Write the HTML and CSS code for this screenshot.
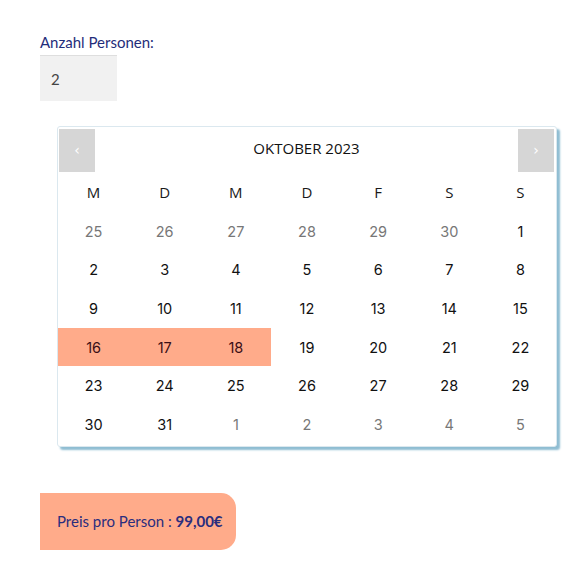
FILE: index.html
```
<!doctype html>
<html>
<head>
  <meta charset="utf-8">
  <title>Buchung</title>
  <link rel="stylesheet" href="styles.css">
</head>
<body>

  <div class="booking">
    <label class="persons-label" for="persons">Anzahl Personen:</label>
    <input class="persons-input" id="persons" type="text" value="2">

    <div class="calendar">
      <div class="cal-head">
        <button class="cal-nav">&#8249;</button>
        <div class="cal-title">OKTOBER 2023</div>
        <button class="cal-nav">&#8250;</button>
      </div>
      <div class="cal-grid">
        <div class="cal-dow">M</div>
        <div class="cal-dow">D</div>
        <div class="cal-dow">M</div>
        <div class="cal-dow">D</div>
        <div class="cal-dow">F</div>
        <div class="cal-dow">S</div>
        <div class="cal-dow">S</div>

        <div class="cal-day other">25</div>
        <div class="cal-day other">26</div>
        <div class="cal-day other">27</div>
        <div class="cal-day other">28</div>
        <div class="cal-day other">29</div>
        <div class="cal-day other">30</div>
        <div class="cal-day">1</div>

        <div class="cal-day">2</div>
        <div class="cal-day">3</div>
        <div class="cal-day">4</div>
        <div class="cal-day">5</div>
        <div class="cal-day">6</div>
        <div class="cal-day">7</div>
        <div class="cal-day">8</div>

        <div class="cal-day">9</div>
        <div class="cal-day">10</div>
        <div class="cal-day">11</div>
        <div class="cal-day">12</div>
        <div class="cal-day">13</div>
        <div class="cal-day">14</div>
        <div class="cal-day">15</div>

        <div class="cal-day selected">16</div>
        <div class="cal-day selected">17</div>
        <div class="cal-day selected">18</div>
        <div class="cal-day">19</div>
        <div class="cal-day">20</div>
        <div class="cal-day">21</div>
        <div class="cal-day">22</div>

        <div class="cal-day">23</div>
        <div class="cal-day">24</div>
        <div class="cal-day">25</div>
        <div class="cal-day">26</div>
        <div class="cal-day">27</div>
        <div class="cal-day">28</div>
        <div class="cal-day">29</div>

        <div class="cal-day">30</div>
        <div class="cal-day">31</div>
        <div class="cal-day other">1</div>
        <div class="cal-day other">2</div>
        <div class="cal-day other">3</div>
        <div class="cal-day other">4</div>
        <div class="cal-day other">5</div>
      </div>
    </div>

    <div class="price">Preis pro Person : <b>99,00&euro;</b></div>
  </div>

</body>
</html>
```

FILE: styles.css
```
html, body {
  margin: 0;
  background: #fff;
}

body {
  font-family: Lato, "Open Sans", sans-serif;
}

.booking {
  padding: 32px 0 0 40px;
}

.persons-label {
  display: block;
  font-size: 15px;
  line-height: 20px;
  color: #1f2d7a;
}

.persons-input {
  display: block;
  box-sizing: border-box;
  width: 77px;
  height: 46px;
  margin-top: 3px;
  padding: 0 11px;
  border: none;
  border-top: 1px solid #dedede;
  background: #f1f1f1;
  font-family: Lato, sans-serif;
  font-size: 15px;
  color: #444;
}

.calendar {
  box-sizing: border-box;
  width: 500px;
  margin: 25px 0 0 17px;
  border: 1px solid #dbe8ef;
  border-radius: 3px;
  background: #fff;
  box-shadow: 3px 3px 2px #8fbdd2;
}

.cal-head {
  display: flex;
  align-items: center;
  height: 44px;
  padding: 1px 2px 0 1px;
}

.cal-nav {
  width: 36px;
  height: 43px;
  border: none;
  background: #d6d6d6;
  color: #fff;
  font-family: "DejaVu Sans", sans-serif;
  font-size: 14px;
  padding: 0;
}

.cal-title {
  flex: 1;
  padding-bottom: 5px;
  text-align: center;
  font-family: "Open Sans", sans-serif;
  font-size: 15px;
  color: #111;
}

.cal-grid {
  display: grid;
  grid-template-columns: repeat(7, 1fr);
  grid-auto-rows: 38.7px;
  padding: 1px 0 2px;
}

.cal-dow,
.cal-day {
  display: flex;
  justify-content: center;
  align-items: center;
}

.cal-dow {
  font-family: "Open Sans", sans-serif;
  font-size: 15px;
  color: #1a1a1a;
}

.cal-day {
  font-family: Inter, sans-serif;
  font-size: 14.5px;
  color: #111;
}

.cal-day.other {
  color: #777;
}

.cal-day.selected {
  background: #ffab8a;
  color: #3a0f17;
}

.price {
  display: inline-block;
  margin-top: 46px;
  padding: 0 17px;
  height: 57px;
  line-height: 57px;
  width: 196px;
  box-sizing: border-box;
  background: #ffab8a;
  border-radius: 0 15px 15px 0;
  font-size: 15px;
  color: #2a2d7e;
  white-space: nowrap;
}

.price b {
  font-weight: 700;
}
```
